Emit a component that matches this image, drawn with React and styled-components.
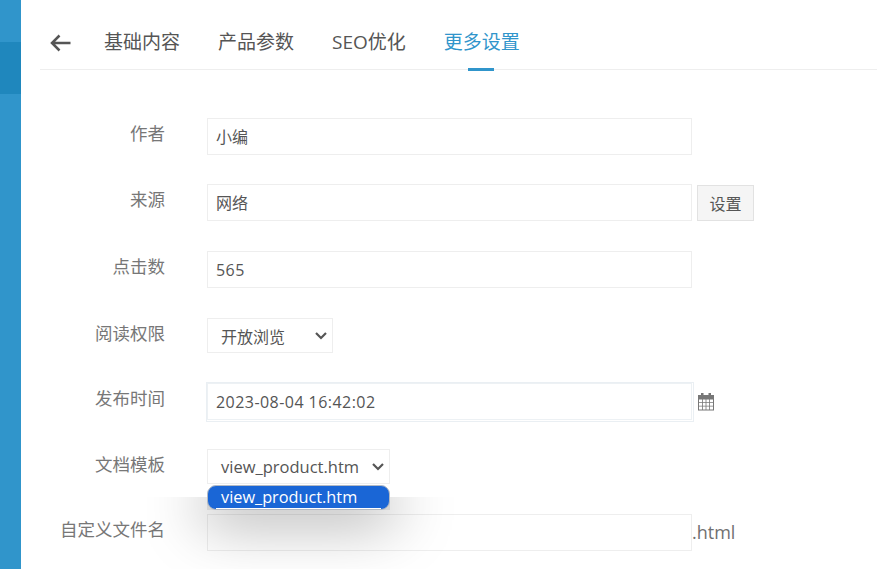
import React from "react";
import styled, { createGlobalStyle } from "styled-components";

const Global = createGlobalStyle`
  html, body { margin: 0; padding: 0; background: #fff; }
  body { width: 877px; height: 569px; overflow: hidden; font-family: "Open Sans", "Noto Sans CJK SC", sans-serif; color: #555; }
`;

const Page = styled.div`
  display: flex;
  width: 877px;
  height: 569px;
  overflow: hidden;
`;
const Sidebar = styled.aside`
  width: 21px;
  flex: none;
  background: #3095cb;
  padding-top: 42px;
`;
const SidebarActive = styled.div`
  height: 52px;
  background: #1f87bd;
`;
const Main = styled.main`
  position: relative;
  flex: 1;
  padding-left: 19px;
`;
const TabBar = styled.nav`
  display: flex;
  align-items: stretch;
  height: 69px;
  border-bottom: 1px solid #eee;
  padding-left: 10px;
`;
const BackButton = styled.span`
  display: flex;
  align-items: center;
  width: 54px;
  padding-top: 17px;
  box-sizing: border-box;
`;
const Tab = styled.a`
  position: relative;
  display: block;
  margin-right: 38px;
  padding-top: 28px;
  font-size: 19px;
  line-height: 28px;
  color: ${(p) => (p.$active ? "#3095cb" : "#555")};
  ${(p) =>
    p.$active &&
    `&::after {
      content: "";
      position: absolute;
      left: 24px;
      bottom: -2px;
      width: 26px;
      height: 3px;
      background: #3095cb;
    }`}
`;
const Form = styled.form`
  display: flex;
  flex-direction: column;
  padding-top: 48px;
`;
const Row = styled.div`
  display: flex;
  align-items: flex-start;
  height: ${(p) => p.$h}px;
`;
const Label = styled.label`
  width: 125px;
  margin-right: 42px;
  flex: none;
  text-align: right;
  font-size: 17.5px;
  line-height: 30px;
  color: #777;
`;
const Input = styled.div`
  box-sizing: border-box;
  width: 485px;
  height: 37px;
  flex: none;
  padding-left: 8px;
  border: 1px solid #eee;
  background: #fff;
  font-size: 16px;
  line-height: 36px;
  color: #555;
  letter-spacing: ${(p) => (p.$spaced ? "0.45px" : "0")};
`;
const DateFrame = styled.div`
  flex: none;
  box-sizing: border-box;
  width: 488px;
  height: 40px;
  border: 1px solid #eaeff3;
  margin: -1px 0 0 -1px;
`;
const DateInput = styled(Input)`
  border-color: #edf1f4;
  line-height: 37px;
`;
const SideButton = styled.button`
  box-sizing: border-box;
  width: 57px;
  height: 36px;
  margin: 1px 0 0 5px;
  padding: 0;
  background: #f5f5f5;
  border: 1px solid #e2e2e2;
  font: inherit;
  font-size: 16px;
  color: #555;
`;
const SelectBox = styled.div`
  box-sizing: border-box;
  display: flex;
  align-items: center;
  justify-content: space-between;
  width: ${(p) => p.$w}px;
  height: 35px;
  padding: 0 4px 0 13px;
  border: 1px solid #eee;
  font-size: ${(p) => p.$fs || 16}px;
  color: #555;
`;
const CalendarIcon = styled.svg`
  margin: 9px 0 0 3px;
`;
const Suffix = styled.span`
  font-size: 18px;
  line-height: 36px;
  color: #707070;
`;
const PopupClip = styled.div`
  position: absolute;
  left: 126px;
  top: 497px;
  width: 320px;
  height: 72px;
  overflow: hidden;
`;
const Shadow = styled.div`
  position: absolute;
  left: 60px;
  top: -12px;
  width: 183px;
  height: 25px;
  background: #d4d4d4;
  box-shadow: 0 6px 60px 4px rgba(0, 0, 0, 0.4);
`;
const Popup = styled.div`
  position: absolute;
  left: 186px;
  top: 485px;
  box-sizing: border-box;
  width: 183px;
  height: 25px;
  padding-left: 13px;
  border: 1px solid #b4bac3;
  border-radius: 9px;
  background: #1a66d6;
  color: #fff;
  font-size: 16.3px;
  line-height: 22px;
  &::after {
    content: "";
    position: absolute;
    left: 8px;
    right: 8px;
    bottom: 0;
    height: 1px;
    background: #fff;
  }
`;

const Chevron = () => (
  <svg width="14" height="9" viewBox="0 0 14 9" fill="none">
    <path d="M2 2l5 5 5-5" stroke="#555" strokeWidth="2.2" />
  </svg>
);

export default function App() {
  return (
    <Page>
      <Global />
      <Sidebar>
        <SidebarActive />
      </Sidebar>
      <Main>
        <TabBar>
          <BackButton>
            <svg width="22" height="18" viewBox="0 0 22 18" fill="none">
              <path d="M20.5 9H2M9.500 1.500L2 9l7.500 7.500" stroke="#555" strokeWidth="2.5" />
            </svg>
          </BackButton>
          <Tab>基础内容</Tab>
          <Tab>产品参数</Tab>
          <Tab>SEO优化</Tab>
          <Tab $active>更多设置</Tab>
        </TabBar>
        <Form>
          <Row $h={66}>
            <Label>作者</Label>
            <Input>小编</Input>
          </Row>
          <Row $h={67}>
            <Label>来源</Label>
            <Input>网络</Input>
            <SideButton type="button">设置</SideButton>
          </Row>
          <Row $h={67}>
            <Label>点击数</Label>
            <Input $spaced>565</Input>
          </Row>
          <Row $h={65}>
            <Label>阅读权限</Label>
            <SelectBox $w={126}>
              开放浏览
              <Chevron />
            </SelectBox>
          </Row>
          <Row $h={66}>
            <Label>发布时间</Label>
            <DateFrame>
              <DateInput $spaced>2023-08-04 16:42:02</DateInput>
            </DateFrame>
            <CalendarIcon width="18" height="19" viewBox="0 0 18 19">
              <path fill="#777" d="M1 3h3V1h2.500v2h5V1H14v2h3v15.500H1z" />
              <path
                fill="#fff"
                d="M2 7.500h3.200v2.800H2zM6 7.500h2.600v2.800H6zM9.400 7.500H12v2.800H9.400zM12.800 7.500H16v2.800h-3.200zM2 11h3.200v2.800H2zM6 11h2.600v2.800H6zM9.400 11H12v2.800H9.400zM12.800 11H16v2.800h-3.200zM2 14.500h3.200v3H2zM6 14.500h2.600v3H6zM9.400 14.500H12v3H9.400zM12.800 14.500H16v3h-3.200z"
              />
            </CalendarIcon>
          </Row>
          <Row $h={65}>
            <Label>文档模板</Label>
            <SelectBox $w={183} $fs={16.5}>
              view_product.htm
              <Chevron />
            </SelectBox>
          </Row>
          <Row $h={55}>
            <Label>自定义文件名</Label>
            <Input />
            <Suffix>.html</Suffix>
          </Row>
        </Form>
        <PopupClip>
          <Shadow />
        </PopupClip>
        <Popup>view_product.htm</Popup>
      </Main>
    </Page>
  );
}
